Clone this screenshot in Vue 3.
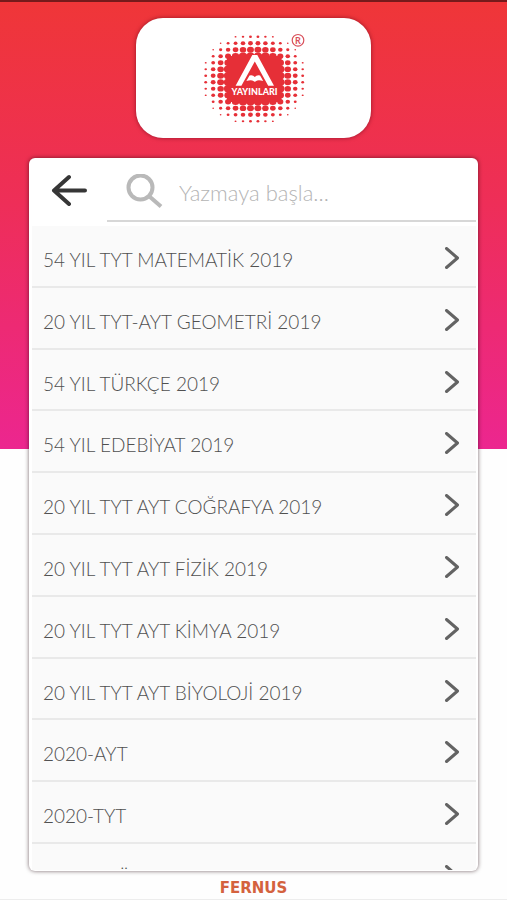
<script setup>
import { ref } from 'vue'

const query = ref('')

const books = [
  '54 YIL TYT MATEMATİK 2019',
  '20 YIL TYT-AYT GEOMETRİ 2019',
  '54 YIL TÜRKÇE 2019',
  '54 YIL EDEBİYAT 2019',
  '20 YIL TYT AYT COĞRAFYA 2019',
  '20 YIL TYT AYT FİZİK 2019',
  '20 YIL TYT AYT KİMYA 2019',
  '20 YIL TYT AYT BİYOLOJİ 2019',
  '2020-AYT',
  '2020-TYT',
  '54 YIL MÜFREDAT',
]

// Halftone dots of the logo: they shrink with the distance from the centre.
const dots = []
for (let row = 0; row < 14; row++) {
  for (let col = 0; col < 14; col++) {
    const u = col - 6.5
    const v = row - 6.5
    const d = Math.hypot(u, v)
    if (d < 7.2) {
      dots.push({
        id: row * 14 + col,
        x: 54.2 + u * 7.46,
        y: 49 + v * 6.5,
        r: Math.min(4.2, 4.2 - (d - 3.8) * 1.02),
      })
    }
  }
}
</script>

<template>
  <div class="page">
    <header class="brand">
      <svg class="logo" viewBox="0 0 108 98" role="img" aria-label="A Yayınları">
        <g fill="#e62f37">
          <ellipse v-for="dot in dots" :key="dot.id" :cx="dot.x" :cy="dot.y" :rx="dot.r" :ry="dot.r * 0.88" />
          <rect x="27" y="26" width="54.500" height="46" />
        </g>
        <path d="M52.300 25h5L74 55.700h-5.800L54.800 31.500 41.400 55.700h-5.800z" fill="#fff" />
        <path d="M49.500 45.500q3.500-.8 5.300 1.500q1.800-2.300 5.300-1.500l3.100 5.500q-5-1.300-7 0q-1.400 1.400-2.800 0q-2-1.300-7 0z" fill="#fff" />
        <text x="54.500" y="64.500" class="logo-name">YAYINLARI</text>
        <circle cx="98" cy="10.300" r="5.800" fill="none" stroke="#d9505a" stroke-width="1.200" />
        <text x="98" y="13.500" class="logo-mark">R</text>
      </svg>
    </header>

    <main class="panel">
      <form class="search" @submit.prevent>
        <button class="back" type="button" aria-label="Geri">
          <svg viewBox="0 0 38 32">
            <path d="M19 3 4 16.500l15 13.500M4 16.500h31" />
          </svg>
        </button>
        <label class="field">
          <svg class="glass" viewBox="0 0 38 34" aria-hidden="true">
            <circle cx="14.500" cy="13.500" r="12" />
            <path d="M23.500 22.500l11.500 10" />
          </svg>
          <input v-model="query" type="text" placeholder="Yazmaya başla..." aria-label="Ara" />
        </label>
      </form>

      <ul class="list">
        <li v-for="book in books" :key="book">
          <a href="#" class="row">
            <span>{{ book }}</span>
            <svg viewBox="0 0 16 22" aria-hidden="true">
              <path d="M2.500 1.500 13.500 11 2.500 20.500" />
            </svg>
          </a>
        </li>
      </ul>
    </main>

    <footer class="footer">FERNUS</footer>
  </div>
</template>

<style>
body {
  margin: 0;
}
</style>

<style scoped>
.page {
  box-sizing: border-box;
  display: flex;
  flex-direction: column;
  height: 100vh;
  padding: 16px 29px 0;
  border-top: 2px solid #761a1b;
  border-bottom: 1px solid #ededed;
  background: linear-gradient(180deg, #ef3638, #ee2e58 45%, #ec268f) no-repeat 0 0 / 100% 447px #fefefe;
  font-family: Lato, "Noto Sans", sans-serif;
}

.brand {
  display: flex;
  justify-content: center;
  align-self: center;
  box-sizing: border-box;
  width: 235px;
  height: 120px;
  padding-top: 12px;
  border-radius: 27px;
  background: #fff;
  box-shadow: 0 0 4px rgba(90, 0, 20, 0.6);
}

.logo {
  width: 108px;
  height: 98px;
}

.logo-name {
  fill: #fff;
  font-size: 9px;
  font-weight: 900;
  text-anchor: middle;
}

.logo-mark {
  fill: #d9505a;
  font-size: 9px;
  font-weight: 700;
  text-anchor: middle;
}

.panel {
  display: flex;
  flex: 1;
  flex-direction: column;
  min-height: 0;
  margin-top: 20px;
  padding: 0 2px 1px 3px;
  border-radius: 6px;
  background: #fff;
  box-shadow: 0 0 4px rgba(30, 0, 10, 0.6);
}

.search {
  display: flex;
  align-items: flex-start;
  padding-bottom: 4px;
}

.back {
  width: 75px;
  height: 64px;
  padding: 0 0 0 18px;
  border: 0;
  background: none;
  text-align: left;
}

.back svg {
  display: block;
  width: 38px;
  height: 32px;
  fill: none;
  stroke: #363636;
  stroke-width: 4;
  stroke-linecap: round;
  stroke-linejoin: round;
}

.field {
  display: flex;
  flex: 1;
  align-items: center;
  gap: 15px;
  box-sizing: border-box;
  min-width: 0;
  height: 64px;
  padding-left: 19px;
  padding-top: 4px;
  border-bottom: 2px solid #d7d7d7;
}

.glass {
  flex: none;
  width: 38px;
  height: 34px;
  fill: none;
  stroke: #b9b9b9;
  stroke-width: 4;
}

input {
  flex: 1;
  min-width: 0;
  padding: 4px 0 0;
  border: 0;
  outline: 0;
  background: none;
  color: #6b6b6b;
  font: 300 22px/24px Lato, "Noto Sans", sans-serif;
}

input::placeholder {
  color: #b4b4b4;
  opacity: 1;
}

/* Ten full rows share the height, and a sliver of the next one shows. */
.list {
  display: grid;
  flex: 1;
  grid-template-rows: repeat(10, minmax(0, 1fr)) 26px;
  min-height: 0;
  margin: 0;
  padding: 0;
  overflow: hidden;
  background: #fafafa;
  list-style: none;
}

.list li {
  box-sizing: border-box;
  border-bottom: 2px solid #e9e9e9;
}

.list li:last-child {
  border-bottom: 0;
}

.row {
  display: flex;
  justify-content: space-between;
  padding: 21px 16px 0 11px;
  color: #505050;
  font-size: 19px;
  font-weight: 300;
  line-height: 26px;
  text-decoration: none;
  white-space: nowrap;
}

.row svg {
  width: 16px;
  height: 22px;
  fill: none;
  stroke: #636363;
  stroke-width: 3;
  stroke-linecap: round;
  stroke-linejoin: round;
}

.footer {
  height: 28px;
  color: #d4623e;
  font: 700 15px/34px "DejaVu Sans", sans-serif;
  text-align: center;
}
</style>
